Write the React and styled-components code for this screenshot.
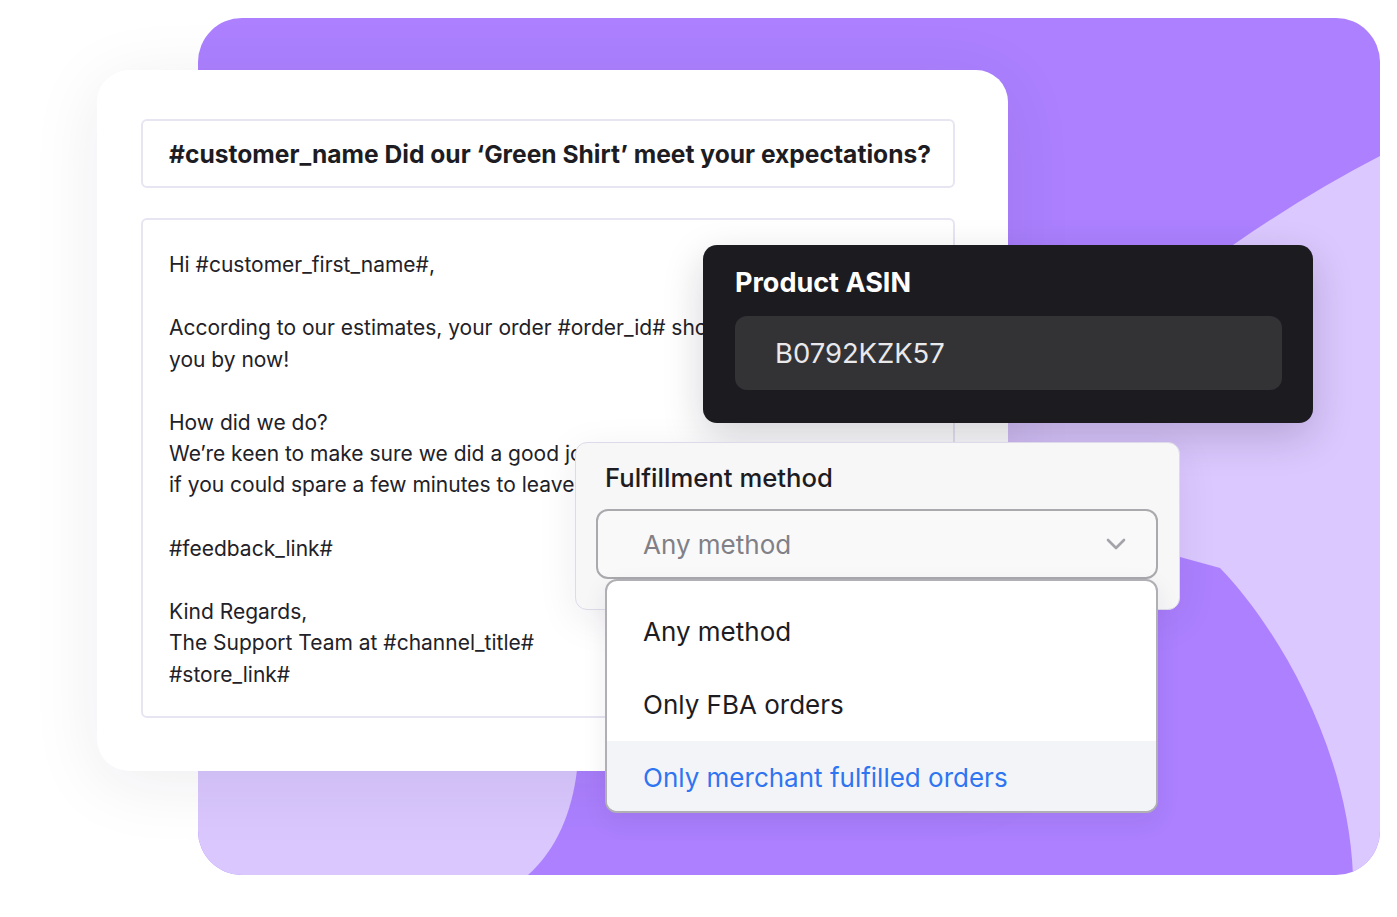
import React from 'react';
import styled, { createGlobalStyle } from 'styled-components';

const GlobalStyle = createGlobalStyle`
  html, body {
    margin: 0;
    padding: 0;
    background: #ffffff;
  }
  body {
    font-family: Inter, "Noto Sans", "Liberation Sans", sans-serif;
    color: #1d1c22;
  }
`;

const Stage = styled.div`
  position: relative;
  width: 1397px;
  height: 917px;
  overflow: hidden;
  background: #fff;
`;

const Backdrop = styled.div`
  position: absolute;
  left: 198px;
  top: 18px;
  width: 1182px;
  height: 857px;
  border-radius: 44px;
  overflow: hidden;
  background: #ac80ff;
  svg {
    display: block;
  }
`;

const EmailCard = styled.div`
  position: absolute;
  left: 97px;
  top: 70px;
  width: 911px;
  height: 701px;
  box-sizing: border-box;
  padding: 49px 53px 0 44px;
  background: #fff;
  border-radius: 32px;
  box-shadow: 0 12px 70px rgba(40, 30, 70, 0.08);
  display: flex;
  flex-direction: column;
  gap: 30px;
`;

const SubjectBox = styled.div`
  height: 69px;
  box-sizing: border-box;
  border: 2px solid #e7e5f2;
  border-radius: 6px;
  display: flex;
  align-items: center;
  padding: 0 26px;
  font-size: 24.6px;
  font-weight: 700;
  color: #1d1c22;
  white-space: nowrap;
`;

const BodyBox = styled.div`
  height: 500px;
  box-sizing: border-box;
  border: 2px solid #e7e5f2;
  border-radius: 6px;
  padding: 29px 26px 0 26px;
  overflow: hidden;
`;

const Para = styled.p`
  margin: 0 0 32px 0;
  font-size: 21px;
  line-height: 31.3px;
  color: #222127;
  white-space: nowrap;
`;

const AsinCard = styled.div`
  position: absolute;
  left: 703px;
  top: 245px;
  width: 610px;
  height: 178px;
  box-sizing: border-box;
  padding: 22px 31px 0 32px;
  background: #1c1b20;
  border-radius: 14px;
  box-shadow: 0 14px 40px rgba(20, 10, 40, 0.18);
  display: flex;
  flex-direction: column;
  gap: 17px;
`;

const AsinLabel = styled.div`
  font-size: 27px;
  font-weight: 700;
  color: #ffffff;
  line-height: 32px;
`;

const AsinInput = styled.div`
  height: 74px;
  border-radius: 12px;
  background: #333336;
  display: flex;
  align-items: center;
  padding: 0 40px;
  font-size: 27.4px;
  color: #e9e9ec;
`;

const FulfillCard = styled.div`
  position: absolute;
  left: 575px;
  top: 442px;
  width: 605px;
  height: 168px;
  box-sizing: border-box;
  padding: 19px 21px 0 20px;
  background: #f7f7f8;
  border: 1px solid #dddbe9;
  border-radius: 12px;
  box-shadow: 0 10px 40px rgba(40, 30, 70, 0.08);
  display: flex;
  flex-direction: column;
  gap: 15px;
`;

const FieldLabel = styled.div`
  padding-left: 9px;
  font-size: 25.7px;
  font-weight: 500;
  line-height: 32px;
  color: #1d1c22;
`;

const SelectBox = styled.div`
  height: 70px;
  box-sizing: border-box;
  border: 2px solid #a9a9ae;
  border-radius: 12px;
  background: #f9f9fa;
  display: flex;
  align-items: center;
  justify-content: space-between;
  padding: 0 30px 0 45px;
  font-size: 26px;
  color: #808086;
`;

const Menu = styled.div`
  position: absolute;
  left: 605px;
  top: 579px;
  width: 553px;
  height: 234px;
  box-sizing: border-box;
  padding-top: 14px;
  background: #fff;
  border: 2px solid #afafb4;
  border-radius: 12px;
  overflow: hidden;
  box-shadow: 0 8px 24px rgba(40, 30, 70, 0.08);
  display: flex;
  flex-direction: column;
`;

const MenuItem = styled.div`
  height: 73px;
  flex-shrink: 0;
  display: flex;
  align-items: center;
  padding-left: 36px;
  font-size: 26px;
  color: ${p => (p.active ? '#2f74f0' : '#1d1c22')};
  background: ${p => (p.active ? '#f3f4f8' : 'transparent')};
`;

const Chevron = () => (
  <svg width="20" height="12" viewBox="0 0 20 12" fill="none">
    <path d="M2 2l8 8 8-8" stroke="#a3a3a9" strokeWidth="2.6" strokeLinecap="round" strokeLinejoin="round" />
  </svg>
);

const bodyLines = [
  ['Hi #customer_first_name#,'],
  ['According to our estimates, your order #order_id# should have arrived with', 'you by now!'],
  ['How did we do?', 'We’re keen to make sure we did a good job and would appreciate it', 'if you could spare a few minutes to leave us a review.'],
  ['#feedback_link#'],
  ['Kind Regards,', 'The Support Team at #channel_title#', '#store_link#'],
];

const options = ['Any method', 'Only FBA orders', 'Only merchant fulfilled orders'];

export default function App() {
  return (
    <Stage>
      <GlobalStyle />
      <Backdrop>
        <svg width="1182" height="857" viewBox="0 0 1182 857">
          <path
            d="M1182 138 Q1110 175 1035 227 L790 420 L790 538 L982 539 L1022 550 C1080 610 1150 730 1155 857 L1182 857 Z"
            fill="#dbc8fe"
          />
          <path d="M0 700 L382 700 L379 752 C374 795 358 832 330 857 L0 857 Z" fill="#d9c7fd" />
        </svg>
      </Backdrop>

      <EmailCard>
        <SubjectBox>#customer_name Did our ‘Green Shirt’ meet your expectations?</SubjectBox>
        <BodyBox>
          {bodyLines.map((para, i) => (
            <Para key={i}>
              {para.map((line, j) => (
                <React.Fragment key={j}>
                  {j > 0 && <br />}
                  {line}
                </React.Fragment>
              ))}
            </Para>
          ))}
        </BodyBox>
      </EmailCard>

      <AsinCard>
        <AsinLabel>Product ASIN</AsinLabel>
        <AsinInput>B0792KZK57</AsinInput>
      </AsinCard>

      <FulfillCard>
        <FieldLabel>Fulfillment method</FieldLabel>
        <SelectBox>
          <span>Any method</span>
          <Chevron />
        </SelectBox>
      </FulfillCard>

      <Menu>
        {options.map((o, i) => (
          <MenuItem key={o} active={i === 2}>{o}</MenuItem>
        ))}
      </Menu>
    </Stage>
  );
}
